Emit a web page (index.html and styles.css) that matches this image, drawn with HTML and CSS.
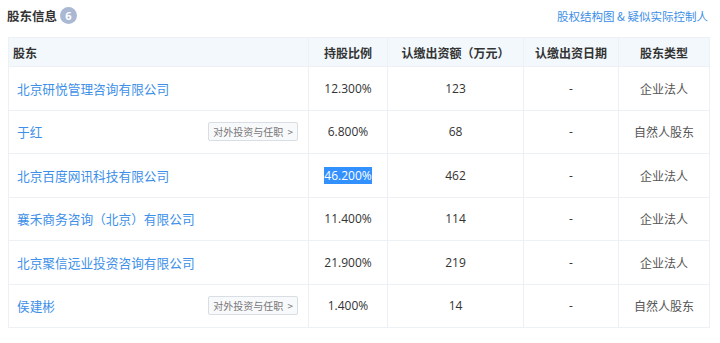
FILE: index.html
```html
<!DOCTYPE html>
<html lang="zh">
<head>
<meta charset="utf-8">
<link rel="stylesheet" href="styles.css">
</head>
<body>
<div class="page">
  <div class="head">
    <div class="title">股东信息<span class="badge">6</span></div>
    <a class="link">股权结构图 &amp; 疑似实际控制人</a>
  </div>
  <table class="grid">
    <colgroup>
      <col class="c1"><col class="c2"><col class="c3"><col class="c4"><col class="c5">
    </colgroup>
    <thead>
      <tr><th class="left">股东</th><th>持股比例</th><th>认缴出资额（万元）</th><th>认缴出资日期</th><th>股东类型</th></tr>
    </thead>
    <tbody>
      <tr><td class="left"><div class="name"><a>北京研悦管理咨询有限公司</a></div></td><td>12.300%</td><td>123</td><td>-</td><td class="grey">企业法人</td></tr>
      <tr><td class="left"><div class="name"><a>于红</a><span class="tag">对外投资与任职 &gt;</span></div></td><td>6.800%</td><td>68</td><td>-</td><td class="grey">自然人股东</td></tr>
      <tr><td class="left"><div class="name"><a>北京百度网讯科技有限公司</a></div></td><td><span class="sel">46.200%</span></td><td>462</td><td>-</td><td class="grey">企业法人</td></tr>
      <tr><td class="left"><div class="name"><a>襄禾商务咨询（北京）有限公司</a></div></td><td>11.400%</td><td>114</td><td>-</td><td class="grey">企业法人</td></tr>
      <tr><td class="left"><div class="name"><a>北京聚信远业投资咨询有限公司</a></div></td><td>21.900%</td><td>219</td><td>-</td><td class="grey">企业法人</td></tr>
      <tr><td class="left"><div class="name"><a>侯建彬</a><span class="tag">对外投资与任职 &gt;</span></div></td><td>1.400%</td><td>14</td><td>-</td><td class="grey">自然人股东</td></tr>
    </tbody>
  </table>
</div>
</body>
</html>
```

FILE: styles.css
```css
html, body {
  margin: 0;
  padding: 0;
  background: #fff;
}
body {
  font-family: "Noto Sans CJK SC", "Noto Sans", sans-serif;
  color: #333;
}
.page {
  width: 701px;
  padding: 0 11px 0 8px;
}
.head {
  height: 37px;
  display: flex;
  align-items: center;
  justify-content: space-between;
  padding-bottom: 6px;
  box-sizing: border-box;
}
.title {
  font-size: 12.5px;
  font-weight: bold;
  color: #333;
  display: flex;
  align-items: center;
  margin-left: -1px;
}
.badge {
  display: inline-flex;
  align-items: center;
  justify-content: center;
  width: 17px;
  height: 17px;
  border-radius: 50%;
  background: #aab8d4;
  color: #fff;
  font-size: 11px;
  font-weight: bold;
  margin-left: 3px;
  font-family: "Open Sans", "Noto Sans", sans-serif;
}
.link {
  font-size: 11.5px;
  color: #3b8ee6;
  margin-right: 1px;
}
.grid {
  width: 701px;
  border-collapse: collapse;
  table-layout: fixed;
  border: 1px solid #edf1f5;
}
.c1 { width: 300px; }
.c2 { width: 79px; }
.c3 { width: 136px; }
.c4 { width: 95px; }
.c5 { width: 91px; }
th {
  height: 28px;
  padding: 0;
  background: #f2f8fc;
  font-size: 12px;
  font-weight: bold;
  color: #333;
  text-align: center;
  border: 1px solid #edf1f5;
}
td {
  height: 42.5px;
  padding: 0;
  font-size: 12px;
  color: #333;
  text-align: center;
  border: 1px solid #edf1f5;
  font-family: "Open Sans", "Noto Sans CJK SC", sans-serif;
}
th.left {
  text-align: left;
  padding-left: 4px;
}
td.left {
  text-align: left;
  padding: 0 10px 0 8px;
}
td.grey {
  color: #555;
  font-family: "Noto Sans CJK SC", sans-serif;
}
.name {
  display: flex;
  align-items: center;
  justify-content: space-between;
}
.name a {
  font-family: "Noto Sans CJK SC", sans-serif;
  font-size: 12.7px;
  color: #3d8fe8;
}
.tag {
  font-family: "Noto Sans CJK SC", sans-serif;
  font-size: 10px;
  color: #777;
  background: #f7f9fb;
  border: 1px solid #d9dee4;
  border-radius: 2px;
  height: 17px;
  line-height: 17px;
  padding: 0 4px;
  word-spacing: 2px;
}
.sel {
  background: #3390ff;
  color: #fff;
}
```
